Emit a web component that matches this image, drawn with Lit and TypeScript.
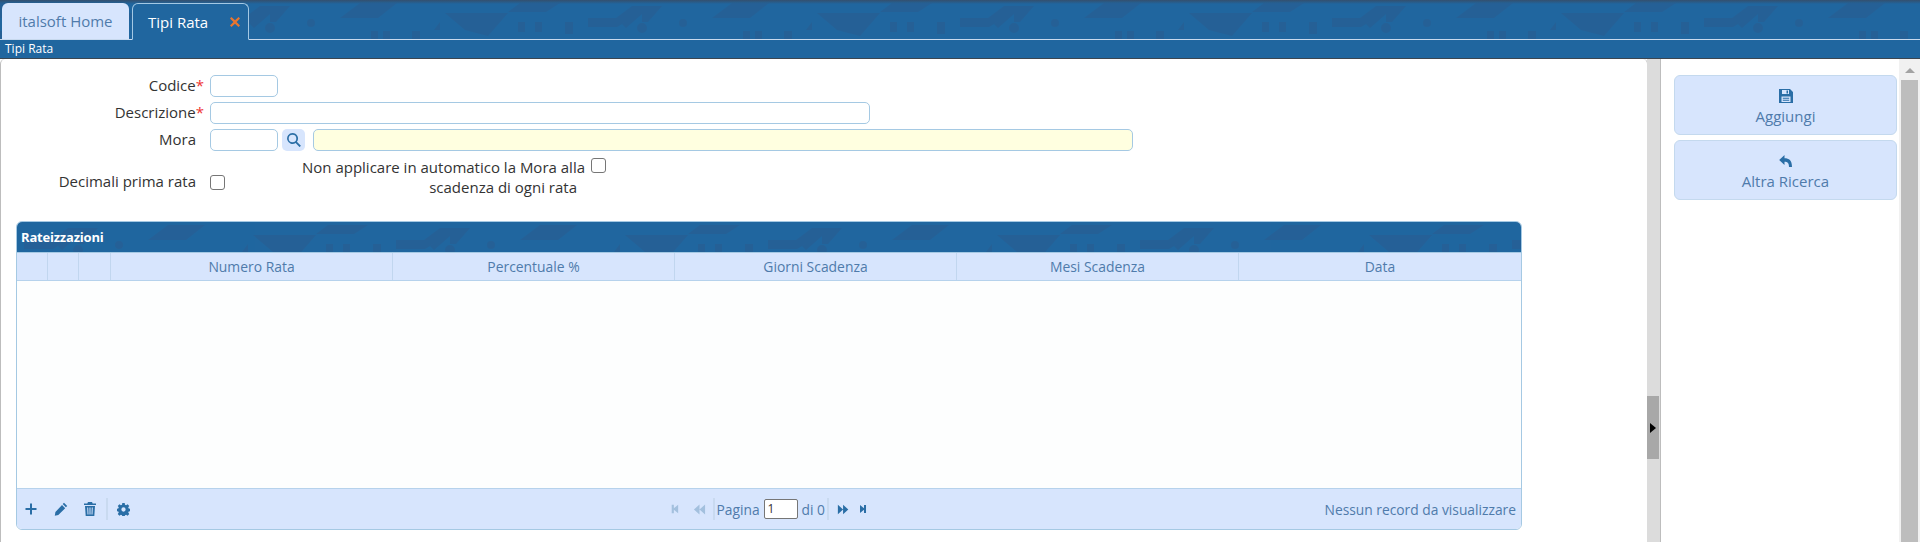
import { LitElement, html, css, svg } from "lit";
import { customElement } from "lit/decorators.js";

// One 372px tile of the faint roofline pattern behind the blue bars
const tile = svg`
  <path d="M70 18L90 3h37l-19 15z" />
  <path d="M175 13h63l-20 23-23-6z" />
  <path d="M238 12l12-9h40l-14 9z" />
  <path d="M318 18h28l16-12h10v6l-25 15h-29z" />
  <path d="M352 24l20-18v8l-16 14z M0 6h20l-14 16h-6z" />
  <path d="M248 22h7v10h-7z M265 22h7v10h-7z M295 22h8v12h-8z" />
  <path d="M-5 28a5 5 0 1 0 10 0a5 5 0 1 0-10 0z M367 28a5 5 0 1 0 10 0a5 5 0 1 0-10 0z M37 23a4 4 0 1 0 8 0a4 4 0 1 0-8 0z" />
  <path d="M101 31h7v8h-7z M113 31h7v8h-7z M142 31h8v8h-8z M164 30l6-8v8z" />
`;

function backdrop(id: string, offset: number) {
  return html`<svg class="tex" aria-hidden="true" width="100%" height="100%">
    <defs>
      <pattern id=${id} x=${offset} y="0" width="372" height="42" patternUnits="userSpaceOnUse">${tile}</pattern>
    </defs>
    <rect width="100%" height="100%" fill="url(#${id})" />
  </svg>`;
}

const ic = (d: string, w = 14, h = 14, vb = "0 0 14 14") =>
  html`<svg class="ic" width=${w} height=${h} viewBox=${vb} aria-hidden="true"><path d=${d} fill="currentColor" fill-rule="evenodd" /></svg>`;

const PLUS = "M6 1.500h2v4.500h4.500v2h-4.500v4.500h-2v-4.500h-4.500v-2h4.500z";
const PENCIL = "M10 .8l3.200 3.200-1.300 1.300-3.200-3.200z M8 3l3.200 3.200-6.900 6.900-3.500.6.6-3.600z";
const TRASH = "M5 0h4l.7 1.500h3.300v1.600h-12v-1.600h3.300z M2 4h10l-.7 10h-8.600z M4.200 5.500l.3 7h1l-.3-7z M6.500 5.500v7h1v-7z M8.800 5.500l-.3 7h1l.3-7z";
const GEAR = "M5.700 0h2.600l.3 1.900 1.200.5 1.600-1.100 1.800 1.800-1.100 1.600.5 1.200 1.900.3v2.600l-1.900.3-.5 1.200 1.100 1.600-1.800 1.800-1.600-1.100-1.200.5-.3 1.900h-2.600l-.3-1.900-1.200-.5-1.600 1.100-1.800-1.800 1.100-1.600-.5-1.200-1.900-.3v-2.600l1.900-.3.5-1.200-1.100-1.600 1.800-1.800 1.600 1.100 1.200-.5z M7 4.700a2.300 2.300 0 1 0 0 4.600a2.300 2.300 0 1 0 0-4.600z";
const FIRST = "M1 1h3v5l6-5v12l-6-5v5h-3z";
const PREV = "M7 1.500v11l-6-5.500z M13 1.500v11l-6-5.500z";
const NEXT = "M1 1.500v11l6-5.500z M7 1.500v11l6-5.500z";
const LAST = "M0 1l6 5v-5h3v12h-3v-5l-6 5z";
const SAVE = "M0 0h11l3 3v11h-14z M3 1v4h7v-4z M7.500 1.500h1.500v3h-1.500z M2.500 7.500v5.500h9v-5.500z M3.800 8.800h6.400v.9h-6.400z M3.800 10.800h6.400v.9h-6.400z";
const UNDO = "M5.500 1v3.200c4.500 0 7.500 2 7.500 8.800h-3c0-4-1.500-5.300-4.500-5.300v3.300l-5.300-5z";
const CLOSE = "M2 0l5 4.600 5-4.600 2 2-4.800 5 4.800 5-2 2-5-4.600-5 4.600-2-2 4.800-5-4.800-5z";
const LENS = "M5.500 0a5.500 5.500 0 0 1 4.400 8.800l4 4-1.300 1.300-4-4a5.500 5.500 0 1 1-3.100-10.100z M5.500 1.700a3.800 3.800 0 1 0 0 7.600a3.800 3.800 0 1 0 0-7.600z";

@customElement("app-root")
export class AppRoot extends LitElement {
  static styles = css`
    :host {
      display: block;
      width: 1920px;
      height: 542px;
      overflow: hidden;
      font-family: "Open Sans", "Noto Sans", sans-serif;
      font-size: 15px;
      color: #333;
      background: #fff;
    }
    * { box-sizing: border-box; }
    .tex { position: absolute; inset: 0; fill: #2a5c90; opacity: 0.55; pointer-events: none; }
    .tabbar {
      position: relative;
      height: 40px;
      background: #20669f;
      border-bottom: 1px solid #c7d9ee;
      display: flex;
      align-items: flex-end;
      padding-left: 2px;
      gap: 3px;
    }
    .tabbar::before {
      content: "";
      position: absolute;
      left: 0; right: 0; top: 0;
      height: 4px;
      background: linear-gradient(#34506e, #20669f00);
    }
    .tab {
      position: relative;
      border-radius: 6px 6px 0 0;
      display: flex;
      align-items: center;
      font-size: 15px;
    }
    .tab.home {
      width: 127px;
      height: 36px;
      background: #d7e5fd;
      color: #4f7bab;
      justify-content: center;
    }
    .tab.active {
      width: 117px;
      height: 37px;
      margin-bottom: -1px;
      background: #20669f;
      color: #fff;
      border: 1px solid #a3c8e4;
      border-bottom-color: #20669f;
      padding-left: 15px;
    }
    .close { position: absolute; left: 97px; top: 13px; color: #e8752f; line-height: 0; }
    .titlebar {
      height: 19px;
      background: #20669f;
      border-bottom: 1px solid #3c4650;
      color: #fff;
      font-size: 12px;
      line-height: 18px;
      padding-left: 5px;
    }
    .main { display: flex; height: 483px; }
    .left {
      width: 1648px;
      margin-right: -1px;
      border-left: 1px solid #bdbdbd;
      border-right: 1px solid #bdbdbd;
      border-top-left-radius: 5px;
      border-top-right-radius: 5px;
      padding: 16px 0 0 15px;
    }
    .splitter {
      width: 14px;
      background: #dcdcdc;
      border-right: 1px solid #bdbdbd;
      display: flex;
      align-items: flex-start;
      padding-top: 337px;
    }
    .grip {
      width: 12px;
      height: 63px;
      background: #a8a8a8;
      display: flex;
      align-items: center;
      padding-left: 3px;
    }
    .grip i {
      border-left: 6px solid #000;
      border-top: 5px solid transparent;
      border-bottom: 5px solid transparent;
    }
    .right {
      flex: 1;
      display: flex;
      border-top-left-radius: 5px;
      padding-left: 13px;
      justify-content: space-between;
    }
    .actions { width: 223px; padding-top: 16px; display: flex; flex-direction: column; gap: 5px; }
    .act {
      height: 60px;
      background: #d7e5fd;
      border: 1px solid #c4d9ee;
      border-radius: 6px;
      color: #4f7bab;
      display: flex;
      flex-direction: column;
      align-items: center;
      padding-top: 13px;
      font-size: 15px;
      line-height: 19px;
      gap: 4px;
    }
    .act .ic { color: #2a6ea6; }
    .scroll { width: 21px; background: #f1f1f1; display: flex; flex-direction: column; align-items: center; }
    .up { margin-top: 9px; border-bottom: 5px solid #a3a3a3; border-left: 5px solid transparent; border-right: 5px solid transparent; }
    .thumb { width: 17px; flex: 1; margin-top: 7px; background: #bdbdbd; }

    .form { display: flex; flex-direction: column; height: 146px; }
    .row { display: flex; align-items: center; height: 22px; margin-bottom: 5px; }
    .lab { width: 188px; flex: none; text-align: right; white-space: nowrap; color: #333; height: 22px; line-height: 20px; }
    .lab b { color: #e33; font-weight: 400; }
    .lab.nostar { padding-right: 8px; }
    .in {
      height: 22px;
      margin-left: 6px;
      border: 1px solid #a5c9e3;
      border-radius: 5px;
      background: #fff;
      flex: none;
    }
    .short { width: 68px; }
    .long { width: 660px; }
    .search {
      width: 23px;
      height: 22px;
      margin: 0 8px 0 4px;
      background: #d7e5fd;
      border-radius: 5px;
      display: flex;
      align-items: center;
      justify-content: center;
      color: #2a6ea6;
      flex: none;
    }
    .ro { width: 820px; margin-left: 0; background: #ffffe0; }
    .checks { display: flex; height: 42px; margin-top: 2px; align-items: flex-start; }
    .cb {
      width: 15px;
      height: 15px;
      border: 1px solid #767676;
      border-radius: 3px;
      background: #fff;
      flex: none;
    }
    .dec { display: flex; align-items: center; margin-top: 13px; width: 209px; flex: none; }
    .dec .cb { margin-left: 6px; }
    .na { width: 360px; text-align: right; line-height: 20px; margin-top: -1px; flex: none; }
    .na span { display: block; white-space: nowrap; }
    .na span + span { padding-right: 8px; }
    .na-wrap { display: flex; align-items: flex-start; }
    .na-wrap .cb { margin: 0 0 0 6px; }

    .panel {
      width: 1506px;
      height: 309px;
      border: 1px solid #a5c9e3;
      border-radius: 6px;
      overflow: hidden;
      display: flex;
      flex-direction: column;
    }
    .phead {
      position: relative;
      height: 30px;
      background: #20669f;
      color: #fff;
      font-weight: 700;
      font-size: 13px;
      line-height: 30px;
      padding-left: 4px;
      letter-spacing: -0.2px;
      flex: none;
    }
    .phead span { position: relative; }
    .cols {
      display: grid;
      grid-template-columns: 31px 31px 32px repeat(5, 1fr);
      height: 29px;
      background: #d7e5fd;
      border-top: 1px solid #a5c9e3;
      border-bottom: 1px solid #b6d2ec;
      flex: none;
    }
    .cols div {
      border-right: 1px solid #c1d6ef;
      text-align: center;
      color: #4f7bab;
      font-size: 13.9px;
      line-height: 27px;
    }
    .cols div:last-child { border-right: 0; }
    .body { flex: 1; background: #fdfefe; }
    .foot {
      height: 41px;
      flex: none;
      background: #d7e5fd;
      border-top: 1px solid #b6d2ec;
      display: grid;
      grid-template-columns: 1fr auto 1fr;
      align-items: center;
      color: #4f7bab;
      font-size: 13.8px;
      padding: 0 5px 0 7px;
    }
    .tools, .pager { display: flex; align-items: center; color: #2a6ea6; }
    .tools .ic { display: block; }
    .tools .sep { margin: 0 9px; }
    .tools .g1 { width: 16px; }
    .tools .g2 { width: 15px; }
    .sep { width: 2px; height: 22px; background: #c9daf0; flex: none; }
    .pager { width: 199px; justify-content: flex-start; }
    .pager .dim { color: #a3c0de; display: flex; }
    .pager .t { color: #4f7bab; white-space: nowrap; }
    .pginput {
      width: 34px;
      height: 20px;
      margin: 0 4px;
      border: 1px solid #767676;
      border-radius: 2px;
      background: #fff;
      font-size: 12px;
      line-height: 18px;
      padding-left: 3px;
      color: #333;
      flex: none;
    }
    .s2 { width: 2px; flex: none; }
    .s7 { width: 7px; flex: none; }
    .s8 { width: 8px; flex: none; }
    .s11 { width: 11px; flex: none; }
    .s12 { width: 12px; flex: none; }
    .msg { text-align: right; white-space: nowrap; }
  `;

  render() {
    return html`
      <div class="tabbar">
        ${backdrop("a", 270)}
        <div class="tab home">italsoft Home</div>
        <div class="tab active">Tipi Rata
          <span class="close">${ic(CLOSE, 10, 10)}</span>
        </div>
      </div>
      <div class="titlebar">Tipi Rata</div>
      <div class="main">
        <div class="left">
          <div class="form">
            <div class="row"><div class="lab">Codice<b>*</b></div><div class="in short"></div></div>
            <div class="row"><div class="lab">Descrizione<b>*</b></div><div class="in long"></div></div>
            <div class="row">
              <div class="lab nostar">Mora</div><div class="in short"></div>
              <div class="search">${ic(LENS)}</div>
              <div class="in ro"></div>
            </div>
            <div class="checks">
              <div class="dec"><div class="lab nostar">Decimali prima rata</div><div class="cb"></div></div>
              <div class="na-wrap">
                <div class="na"><span>Non applicare in automatico la Mora alla</span><span>scadenza di ogni rata</span></div>
                <div class="cb"></div>
              </div>
            </div>
          </div>
          <div class="panel">
            <div class="phead">${backdrop("b", 61)}<span>Rateizzazioni</span></div>
            <div class="cols">
              <div></div><div></div><div></div>
              <div>Numero Rata</div><div>Percentuale %</div><div>Giorni Scadenza</div><div>Mesi Scadenza</div><div>Data</div>
            </div>
            <div class="body"></div>
            <div class="foot">
              <div class="tools">
                ${ic(PLUS)}<span class="g1"></span>${ic(PENCIL)}<span class="g2"></span>${ic(TRASH)}
                <span class="sep"></span>${ic(GEAR, 13, 13)}
              </div>
              <div class="pager">
                <span class="dim">${ic(FIRST, 10, 12)}</span>
                <span class="s12"></span>
                <span class="dim">${ic(PREV, 13, 13)}</span>
                <span class="s7"></span><span class="sep"></span><span class="s2"></span>
                <span class="t">Pagina</span>
                <span class="pginput">1</span>
                <span class="t">di 0</span>
                <span class="s2"></span><span class="sep"></span><span class="s8"></span>
                ${ic(NEXT, 13, 13)}
                <span class="s11"></span>
                ${ic(LAST, 10, 12)}
              </div>
              <div class="msg">Nessun record da visualizzare</div>
            </div>
          </div>
        </div>
        <div class="splitter"><div class="grip"><i></i></div></div>
        <div class="right">
          <div class="actions">
            <div class="act">${ic(SAVE)}<span>Aggiungi</span></div>
            <div class="act">${ic(UNDO)}<span>Altra Ricerca</span></div>
          </div>
          <div class="scroll"><div class="up"></div><div class="thumb"></div></div>
        </div>
      </div>
    `;
  }
}
